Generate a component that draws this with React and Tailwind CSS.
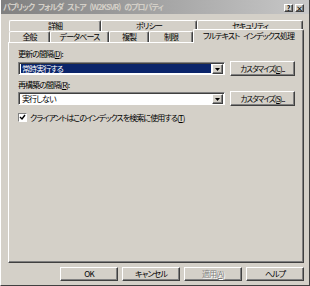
import React from "react";

const font = { fontFamily: '"Noto Sans CJK JP", "Noto Sans", sans-serif' };

function Raised({ className = "", children }) {
  return (
    <div
      className={
        "flex items-center justify-center whitespace-nowrap bg-[#d4d0c8] border border-t-white border-l-white border-b-[#404040] border-r-[#404040] shadow-[inset_-1px_-1px_#808080] " +
        className
      }
    >
      {children}
    </div>
  );
}

function Tab({ w, children, selected = false }) {
  return (
    <div
      className={
        "flex items-center justify-center whitespace-nowrap bg-[#d4d0c8] border-t border-l border-r border-t-white border-l-white border-r-[#404040] rounded-t-[2px] shadow-[inset_-1px_0_#808080] text-black " +
        w +
        (selected ? " relative z-10 h-[14px] -mt-[3px] -mb-px pb-[2px]" : " h-[11px]")
      }
    >
      {children}
    </div>
  );
}

function Select({ text, highlighted }) {
  return (
    <div className="flex w-[207px] h-[13px] bg-white border border-t-[#808080] border-l-[#808080] border-b-white border-r-white shadow-[inset_1px_1px_#404040] pl-[2px] pt-[1px] pr-px pb-px">
      <div className="flex-1 flex items-center">
        <span
          className={
            "h-[9px] flex items-center leading-none px-px " +
            (highlighted ? "bg-[#0a246a] text-white w-full" : "text-black")
          }
        >
          {text}
        </span>
      </div>
      <Raised className="w-[11px] h-[10px] ml-[1px]">
        <svg width="5" height="3" viewBox="0 0 5 3">
          <path d="M0 0h5L2.5 3z" fill="#000" />
        </svg>
      </Raised>
    </div>
  );
}

export default function App() {
  return (
    <div
      className="w-[310px] h-[286px] bg-[#d4d0c8] flex flex-col overflow-hidden text-[8px] leading-none [font-feature-settings:'palt'] tracking-[-0.9px] [word-spacing:3px] border-l border-l-white border-r border-r-[#404040] border-b border-b-[#404040]"
      style={font}
    >
      <div className="h-[14px] shrink-0 flex items-center bg-linear-to-r from-[#808080] to-[#c8c8c8] pl-[2px] pr-[5px]">
        <span className="text-[#d4d0c8] font-bold flex-1 whitespace-nowrap tracking-[-1px]">
          パブリック フォルダ ストア (W2KSVR) のプロパティ
        </span>
        <div className="flex gap-[2px] mt-[2px] tracking-normal">
          <Raised className="w-[9px] h-[8px] text-[7px] font-bold">?</Raised>
          <Raised className="w-[9px] h-[8px] text-[7px] font-bold">×</Raised>
        </div>
      </div>

      <div className="mt-[6px] ml-[8px] flex">
        <Tab w="w-[92px]">詳細</Tab>
        <Tab w="w-[96px]">ポリシー</Tab>
        <Tab w="w-[106px]">セキュリティ</Tab>
      </div>
      <div className="ml-[7px] flex items-end">
        <div className="w-px" />
        <Tab w="w-[41px]">全般</Tab>
        <Tab w="w-[59px]">データベース</Tab>
        <Tab w="w-[40px]">複製</Tab>
        <Tab w="w-[44px]">制限</Tab>
        <Tab w="w-[111px]" selected>
          フルテキスト インデックス処理
        </Tab>
      </div>

      <div className="ml-[7px] w-[296px] h-[221px] shrink-0 border border-t-white border-l-white border-b-[#404040] border-r-[#404040] shadow-[inset_-1px_-1px_#808080] flex flex-col pl-[9px] pt-[6px] text-black">
        <div className="h-[10px] flex items-center whitespace-pre">
          更新の間隔(<u>D</u>):
        </div>
        <div className="mt-[2px] flex items-center">
          <Select text="常時実行する" highlighted />
          <Raised className="ml-[5px] w-[65px] h-[15px] text-[7.5px] tracking-[-1px]">
            カスタマイズ(<u>C</u>)...
          </Raised>
        </div>
        <div className="mt-[4px] h-[10px] flex items-center whitespace-pre">
          再構築の間隔(<u>R</u>):
        </div>
        <div className="mt-[1px] flex items-center">
          <Select text="実行しない" />
          <Raised className="ml-[5px] w-[65px] h-[15px] text-[7.5px] tracking-[-1px]">
            カスタマイズ(<u>S</u>)...
          </Raised>
        </div>
        <div className="mt-[7px] flex items-center">
          <div className="w-[9px] h-[9px] bg-white border border-t-[#808080] border-l-[#808080] border-b-white border-r-white flex items-center justify-center">
            <svg width="7" height="7" viewBox="0 0 7 7">
              <path d="M1 3l2 2 3-4" stroke="#000" strokeWidth="1.4" fill="none" />
            </svg>
          </div>
          <span className="ml-[3px] whitespace-nowrap">
            クライアントはこのインデックスを検索に使用する(<u>T</u>)
          </span>
        </div>
      </div>

      <div className="mt-[4px] flex justify-end gap-[4px] pr-[5px]">
        <Raised className="w-[58px] h-[14px]">OK</Raised>
        <Raised className="w-[58px] h-[14px]">キャンセル</Raised>
        <Raised className="w-[58px] h-[14px] text-[#808080] [text-shadow:1px_1px_#fff]">
          適用(<u>A</u>)
        </Raised>
        <Raised className="w-[58px] h-[14px]">ヘルプ</Raised>
      </div>
    </div>
  );
}
